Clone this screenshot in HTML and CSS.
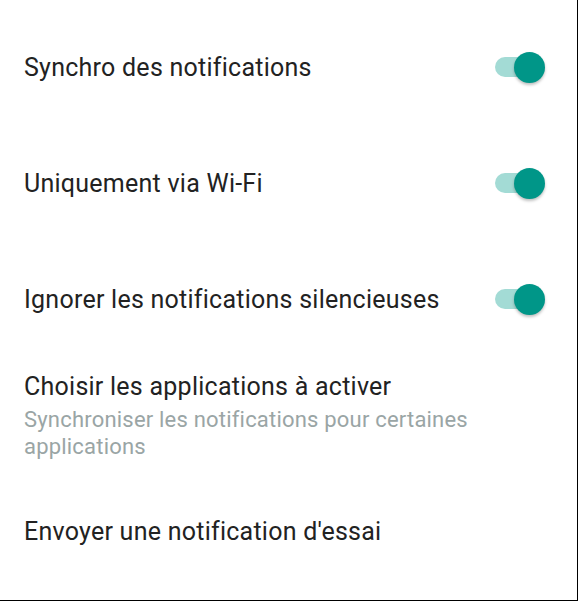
FILE: index.html
```html
<!DOCTYPE html>
<html lang="fr">
<head>
    <meta charset="UTF-8">
    <meta name="viewport" content="width=device-width, initial-scale=1.0">
    <title>Notifications</title>
    <link rel="stylesheet" href="styles.css">
</head>
<body>
    <div class="settings">
        <div class="row">
            <div class="title">Synchro des notifications</div>
            <div class="switch on"><span class="track"></span><span class="thumb"></span></div>
        </div>
        <div class="row">
            <div class="title">Uniquement via Wi-Fi</div>
            <div class="switch on"><span class="track"></span><span class="thumb"></span></div>
        </div>
        <div class="row">
            <div class="title">Ignorer les notifications silencieuses</div>
            <div class="switch on"><span class="track"></span><span class="thumb"></span></div>
        </div>
        <div class="row row-text">
            <div class="text">
                <div class="title">Choisir les applications à activer</div>
                <div class="summary">Synchroniser les notifications pour certaines applications</div>
            </div>
        </div>
        <div class="row">
            <div class="title">Envoyer une notification d'essai</div>
        </div>
    </div>
</body>
</html>
```

FILE: styles.css
```css
body {
    margin: 0;
    background-color: #fff;
    font-family: Roboto, "Liberation Sans", sans-serif;
}

.settings {
    box-sizing: border-box;
    width: 578px;
    height: 601px;
    padding-top: 9px;
    border-right: 1px solid #000;
    border-bottom: 1px solid #000;
    overflow: hidden;
}

.row {
    display: flex;
    align-items: center;
    justify-content: space-between;
    min-height: 116px;
    padding: 2px 31px 0 24px;
    box-sizing: border-box;
}

.row-text {
    min-height: 0;
    padding-top: 15px;
    padding-bottom: 13px;
}

.title {
    font-size: 25px;
    line-height: 30px;
    letter-spacing: 0.25px;
    color: #222;
}

.summary {
    max-width: 460px;
    margin-top: 4px;
    font-size: 22px;
    line-height: 27px;
    letter-spacing: 0.2px;
    color: #9aa5a5;
}

/* Switch */
.switch {
    position: relative;
    top: -1px;
    width: 52px;
    height: 32px;
    flex-shrink: 0;
}

.switch .track {
    position: absolute;
    left: 1px;
    top: 6px;
    width: 44px;
    height: 20px;
    border-radius: 10px;
    background-color: #a3dbd5;
}

.switch .thumb {
    position: absolute;
    left: 20px;
    top: 1px;
    width: 31px;
    height: 31px;
    border-radius: 50%;
    background-color: #009688;
    box-shadow: 0 2px 3px rgba(0, 0, 0, 0.25);
}
```
